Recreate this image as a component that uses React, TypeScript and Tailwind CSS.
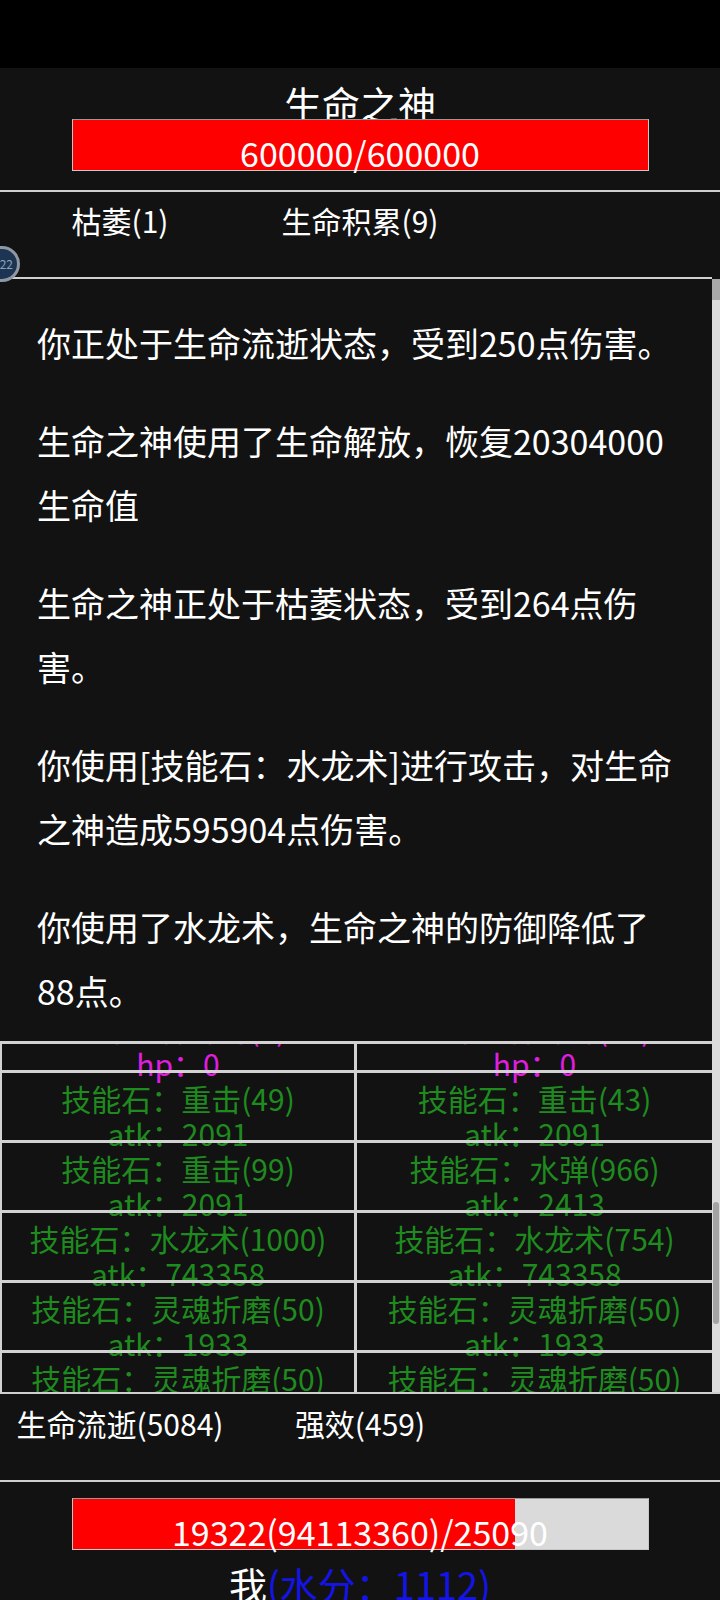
import type { ReactNode } from "react";

type Stone = { name: string; sub: string; tone: "hp" | "atk" };

const rows: [Stone, Stone][] = [
  [
    { name: "生命之神碎片(1)", sub: "hp：0", tone: "hp" },
    { name: "生命之神碎片(12)", sub: "hp：0", tone: "hp" },
  ],
  [
    { name: "技能石：重击(49)", sub: "atk：2091", tone: "atk" },
    { name: "技能石：重击(43)", sub: "atk：2091", tone: "atk" },
  ],
  [
    { name: "技能石：重击(99)", sub: "atk：2091", tone: "atk" },
    { name: "技能石：水弹(966)", sub: "atk：2413", tone: "atk" },
  ],
  [
    { name: "技能石：水龙术(1000)", sub: "atk：743358", tone: "atk" },
    { name: "技能石：水龙术(754)", sub: "atk：743358", tone: "atk" },
  ],
  [
    { name: "技能石：灵魂折磨(50)", sub: "atk：1933", tone: "atk" },
    { name: "技能石：灵魂折磨(50)", sub: "atk：1933", tone: "atk" },
  ],
  [
    { name: "技能石：灵魂折磨(50)", sub: "atk：1933", tone: "atk" },
    { name: "技能石：灵魂折磨(50)", sub: "atk：1933", tone: "atk" },
  ],
];

const log = [
  "你正处于生命流逝状态，受到250点伤害。",
  "生命之神使用了生命解放，恢复20304000生命值",
  "生命之神正处于枯萎状态，受到264点伤害。",
  "你使用[技能石：水龙术]进行攻击，对生命之神造成595904点伤害。",
  "你使用了水龙术，生命之神的防御降低了88点。",
];

function Rule() {
  return <div className="h-[2px] bg-[#cfcfcf]" />;
}

function StatusRow({ items, pt }: { items: string[]; pt: string }) {
  return (
    <div className={`grid h-[85px] grid-cols-3 text-center text-[30px] leading-[30px] ${pt}`}>
      {items.map((s) => (
        <div key={s}>{s}</div>
      ))}
    </div>
  );
}

function Cell({ stone, divider }: { stone: Stone; divider?: boolean }) {
  const color = stone.tone === "hp" ? "text-[#e01ee0]" : "text-[#1f8b1f]";
  return (
    <div className={`pt-[8px] text-center text-[30px] leading-[35px] ${color} ${divider ? "border-r-[3px] border-[#d2d2d2]" : ""}`}>
      <div className="whitespace-nowrap">{stone.name}</div>
      <div className="whitespace-nowrap">{stone.sub}</div>
    </div>
  );
}

function HpBar({ pct, children }: { pct: number; children: ReactNode }) {
  return (
    <div className="relative mx-auto flex h-[52px] w-[577px] items-end justify-center border border-[#c8c8c8] border-t-[#9a9a9a] bg-[#dadada]">
      <div className="absolute inset-y-0 left-0 bg-[#ff0000]" style={{ width: `${pct}%` }} />
      <span className="relative whitespace-nowrap text-[34px] leading-[34px] text-white">{children}</span>
    </div>
  );
}

export default function App() {
  return (
    <div className="relative h-[1600px] overflow-hidden bg-[#121212] font-['Noto_Sans_CJK_SC',sans-serif] text-white">
      <div className="h-[68px] bg-black" />

      {/* boss */}
      <div className="h-[51px] overflow-hidden pt-[16px] text-center text-[38px] leading-[38px]">生命之神</div>
      <HpBar pct={100}>600000/600000</HpBar>
      <div className="h-[19px]" />
      <Rule />
      <StatusRow items={["枯萎(1)", "生命积累(9)"]} pt="pt-[13px]" />

      {/* battle log */}
      <div className="flex">
        <div className="w-[712px] border-t-2 border-[#cfcfcf]">
          <div className="h-[762px] overflow-hidden pl-[37px] pr-[35px] pt-[32px] text-[34px] leading-[64px]">
            {log.map((line) => (
              <p key={line} className="mb-[34px]">
                {line}
              </p>
            ))}
          </div>
        </div>
        <div className="mt-[2px] w-[8px] bg-[#dcdcdc]">
          <div className="h-[21px] bg-[#a8a8a8]" />
        </div>
      </div>

      {/* stones */}
      <div className="flex border-b-2 border-[#cfcfcf]">
        <div className="h-[351px] w-[712px] overflow-hidden border-t-[3px] border-l-2 border-[#d2d2d2]">
          <div className="-mt-[44px]">
            {rows.map(([a, b], i) => (
              <div key={i} className="relative grid h-[70px] grid-cols-2 border-t-[3px] border-[#d2d2d2]">
                <Cell stone={a} divider />
                <Cell stone={b} />
              </div>
            ))}
          </div>
        </div>
        <div className="w-[8px] bg-[#dcdcdc] pt-[161px]">
          <div className="mx-auto h-[122px] w-[6px] rounded-full bg-[#a3a3a3]" />
        </div>
      </div>

      <StatusRow items={["生命流逝(5084)", "强效(459)"]} pt="pt-[14px]" />
      <div className="h-px" />
      <Rule />

      {/* player */}
      <div className="pt-[16px]">
        <HpBar pct={77}>19322(94113360)/25090</HpBar>
        <div className="mt-[15px] text-center text-[38px] leading-[38px]">
          我<span className="text-[#1414e6]">(水分：1112)</span>
        </div>
      </div>

      <div className="absolute left-[-16px] top-[246px] flex h-[36px] w-[36px] items-center justify-end rounded-full border-[3px] border-[#8d98a4] bg-[#1d3553] pr-[4px] text-[12px] text-[#8ea2b8]">
        22
      </div>
    </div>
  );
}
